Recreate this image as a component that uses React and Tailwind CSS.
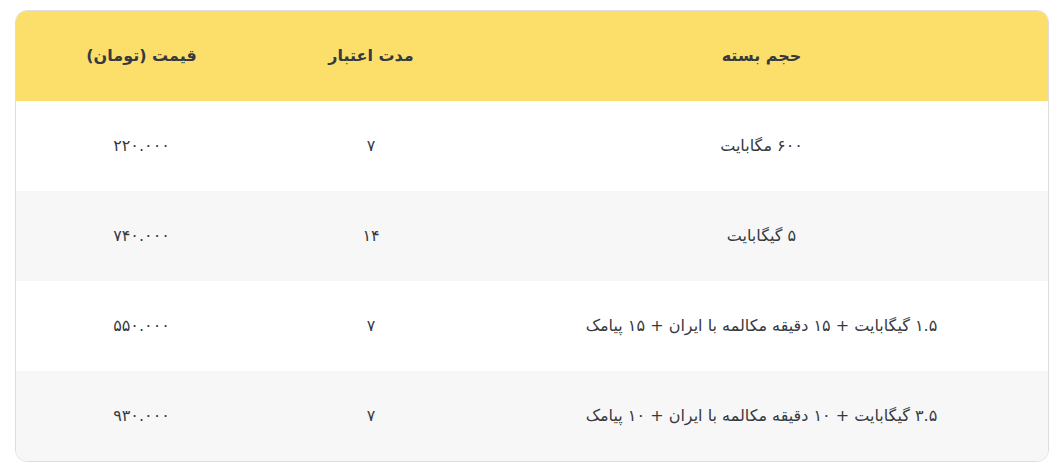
import React from "react";

const rows = [
  { size: "۶۰۰ مگابایت", days: "۷", price: "۲۲۰.۰۰۰" },
  { size: "۵ گیگابایت", days: "۱۴", price: "۷۴۰.۰۰۰" },
  { size: "۱.۵ گیگابایت + ۱۵ دقیقه مکالمه با ایران + ۱۵ پیامک", days: "۷", price: "۵۵۰.۰۰۰" },
  { size: "۳.۵ گیگابایت + ۱۰ دقیقه مکالمه با ایران + ۱۰ پیامک", days: "۷", price: "۹۳۰.۰۰۰" },
];

export default function App() {
  return (
    <div className="bg-white w-[1064px] h-[473px] px-[15px] pt-[10px]" style={{ fontFamily: '"DejaVu Sans", "Noto Sans", sans-serif' }}>
      <div dir="rtl" className="border border-[#dedede] rounded-[12px] overflow-hidden">
        <table className="w-full border-collapse text-[16px] text-[#363a40]">
          <thead>
            <tr className="bg-[#fcdf6b] h-[90px]">
              <th className="font-bold text-center text-[16px] w-[573px]">حجم بسته</th>
              <th className="font-bold text-center text-[16px] w-[208px]">مدت اعتبار</th>
              <th className="font-bold text-center text-[16px]">قیمت (تومان)</th>
            </tr>
          </thead>
          <tbody>
            {rows.map((r, i) => (
              <tr key={i} className={`h-[90px] ${i % 2 === 1 ? "bg-[#f7f7f7]" : "bg-white"}`}>
                <td className="text-center">{r.size}</td>
                <td className="text-center">{r.days}</td>
                <td className="text-center">{r.price}</td>
              </tr>
            ))}
          </tbody>
        </table>
      </div>
    </div>
  );
}
